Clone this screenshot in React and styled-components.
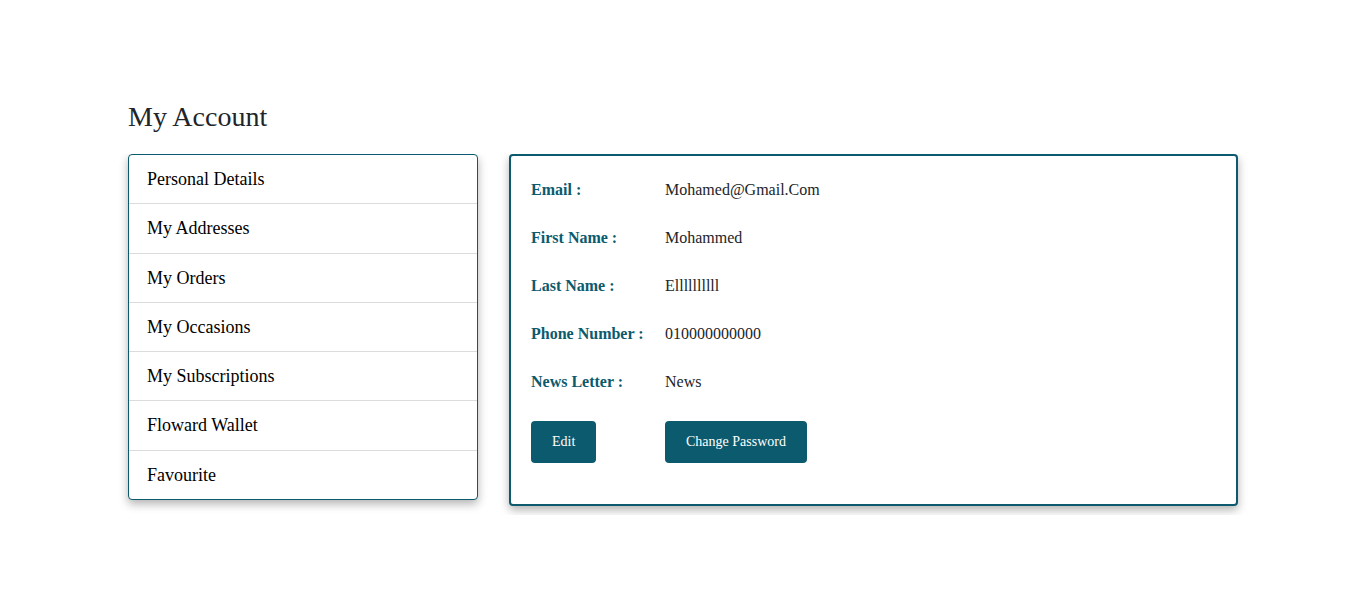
import React from 'react'
import styled, { createGlobalStyle } from 'styled-components'

const GlobalStyle = createGlobalStyle`
    body {
        margin: 0;
        background: #fff;
        font-family: "Liberation Serif", "Times New Roman", serif;
        color: #212529;
    }
`

const Page = styled.div`
    width: 1110px;
    margin: 0 auto;
    padding-top: 100px;
`

const Title = styled.h1`
    margin: 0 0 20px;
    font-size: 28px;
    font-weight: 400;
    line-height: 34px;
    color: #212529;
`

const Row = styled.div`
    display: flex;
    align-items: flex-start;
    gap: 31px;
    margin: 0 -20px;
    padding: 0 20px 9px;
    overflow: hidden;
`

const SideMenu = styled.ul`
    list-style: none;
    margin: 0;
    padding: 0;
    width: 350px;
    flex: none;
    box-sizing: border-box;
    border: 1px solid #0b5a6d;
    border-radius: 4px;
    background: #fff;
    box-shadow: 0 4px 10px rgba(0, 0, 0, 0.3);
    overflow: hidden;
`

const MenuItem = styled.li`
    padding: 12px 18px;
    font-size: 18px;
    line-height: 24.3px;
    color: #000;
    border-top: ${props => (props.first ? 'none' : '1px solid #dcdcdc')};
    cursor: pointer;
`

const DetailsCard = styled.div`
    flex: 1;
    box-sizing: border-box;
    border: 2px solid #0b5a6d;
    border-radius: 4px;
    background: #fff;
    box-shadow: 0 4px 10px rgba(0, 0, 0, 0.3);
    padding: 22px 20px 41px;
`

const InfoGrid = styled.div`
    display: grid;
    grid-template-columns: 134px 1fr;
    row-gap: 24px;
`

const Label = styled.div`
    font-size: 16px;
    font-weight: 700;
    line-height: 24px;
    color: #0b5a6d;
`

const Value = styled.div`
    font-size: 16px;
    line-height: 24px;
    color: #212529;
`

const Actions = styled.div`
    display: grid;
    grid-template-columns: 134px auto;
    justify-items: start;
    margin-top: 27px;
`

const Button = styled.button`
    height: 42px;
    padding: 0 21px;
    border: none;
    border-radius: 4px;
    background: #0b5a6d;
    color: #fff;
    font-family: "Liberation Serif", "Times New Roman", serif;
    font-size: 14px;
    cursor: pointer;
`

const menu = [
    'Personal Details',
    'My Addresses',
    'My Orders',
    'My Occasions',
    'My Subscriptions',
    'Floward Wallet',
    'Favourite',
]

const details = [
    ['Email :', 'Mohamed@Gmail.Com'],
    ['First Name :', 'Mohammed'],
    ['Last Name :', 'Ellllllllll'],
    ['Phone Number :', '010000000000'],
    ['News Letter :', 'News'],
]

export default function App() {
    return (
        <>
            <GlobalStyle />
            <Page>
                <Title>My Account</Title>
                <Row>
                    <SideMenu>
                        {menu.map((item, i) => (
                            <MenuItem key={item} first={i === 0}>{item}</MenuItem>
                        ))}
                    </SideMenu>
                    <DetailsCard>
                        <InfoGrid>
                            {details.map(([label, value]) => (
                                <React.Fragment key={label}>
                                    <Label>{label}</Label>
                                    <Value>{value}</Value>
                                </React.Fragment>
                            ))}
                        </InfoGrid>
                        <Actions>
                            <Button>Edit</Button>
                            <Button>Change Password</Button>
                        </Actions>
                    </DetailsCard>
                </Row>
            </Page>
        </>
    )
}
